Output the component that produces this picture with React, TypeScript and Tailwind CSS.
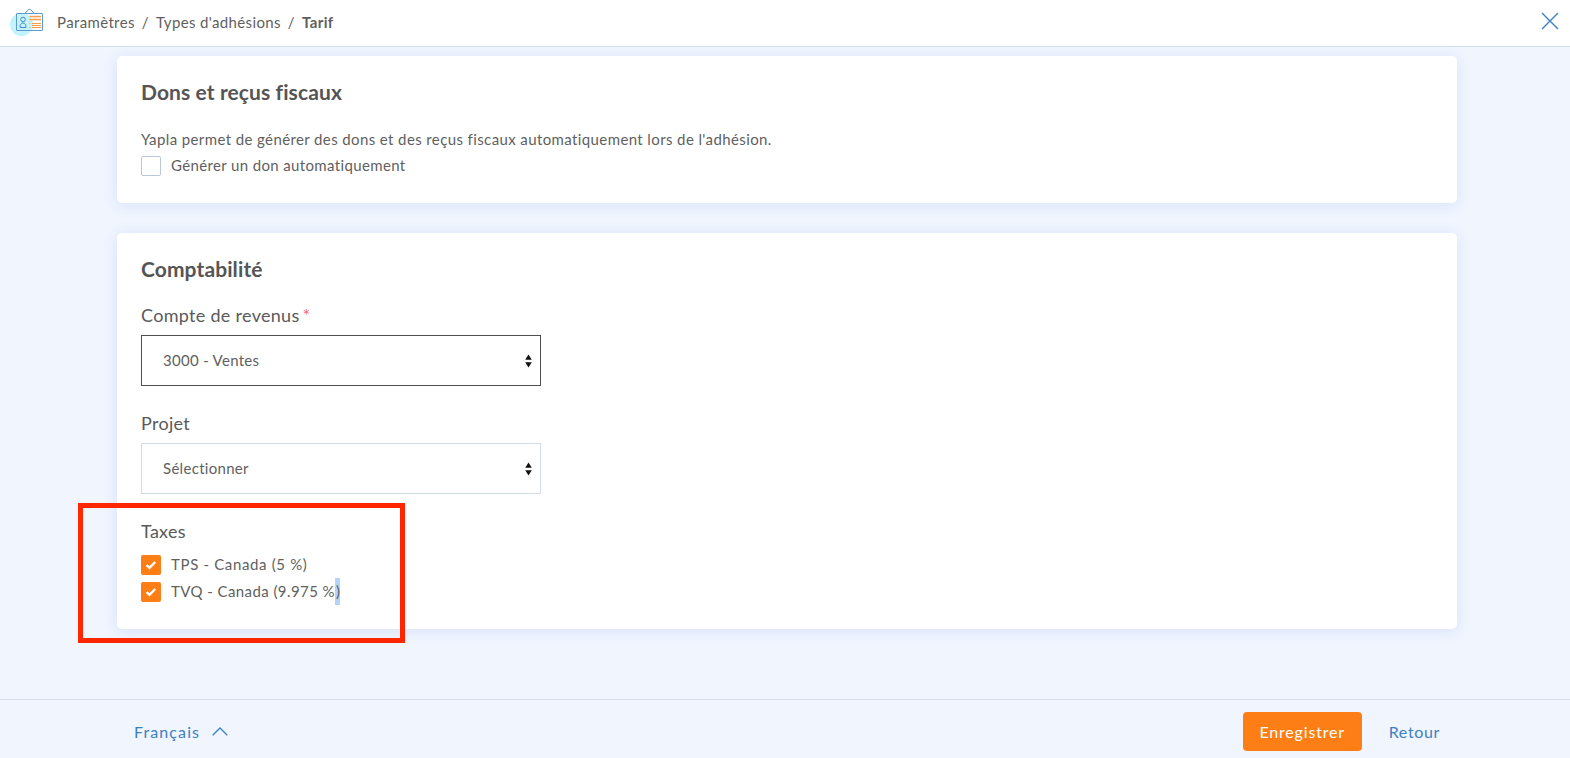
import React from "react";

const font = { fontFamily: '"Lato", "Noto Sans", sans-serif' };

function Check({ checked, label, last, tracking }: { checked?: boolean; label: string; last?: boolean; tracking: string }) {
  return (
    <div className="flex items-center h-[27px]">
      {checked ? (
        <span className="w-5 h-5 rounded-[2px] bg-[#fd7e14] flex items-center justify-center">
          <svg width="12" height="10" viewBox="0 0 12 10" fill="none">
            <path d="M1.6 5.2L4.5 7.8L10.2 2" stroke="#fff" strokeWidth="2.4" />
          </svg>
        </span>
      ) : (
        <span className="w-5 h-5 rounded-[2px] border border-[#b8c7da] bg-white" />
      )}
      <span className={`ml-[10px] text-[15px] text-[#5f5f5f] leading-[27px] ${tracking}`}>
        {label}
        {last && (
          <>
            <span className="bg-[#b4d5fb] inline-block w-[5px] h-[27px] align-top -mr-[4px]" />)
          </>
        )}
      </span>
    </div>
  );
}

function Select({ value, active }: { value: string; active?: boolean }) {
  return (
    <div className={`w-[400px] h-[51px] border bg-white flex items-center justify-between pl-[21px] pr-[8px] ${active ? "border-[#4f4f4f]" : "border-[#d2dce8]"}`}>
      <span className="text-[15px] text-[#5f5f5f] tracking-[0.3px]">{value}</span>
      <svg width="7" height="14" viewBox="0 0 7 14" fill="#111">
        <path d="M3.5 0.5L6.8 5.8H0.2Z" />
        <path d="M3.5 13.5L0.2 8.2H6.8Z" />
      </svg>
    </div>
  );
}

function Card({ title, className, children }: { title: string; className: string; children: React.ReactNode }) {
  return (
    <section className={`w-[1340px] bg-white rounded-[5px] shadow-[0_2px_14px_rgba(120,155,225,0.2)] px-6 pt-[23px] ${className}`}>
      <h2 className="text-[21px] font-bold text-[#555] leading-[26px] tracking-[0.1px]">{title}</h2>
      {children}
    </section>
  );
}

function Label({ children, className }: { children: React.ReactNode; className: string }) {
  return <div className={`text-[18px] text-[#5a5a5a] tracking-[0.3px] leading-6 flex ${className}`}>{children}</div>;
}

export default function App() {
  return (
    <div style={font} className="w-[1570px] h-[758px] overflow-hidden bg-[#f0f5fe] flex flex-col">
      <header className="h-[47px] shrink-0 bg-white border-b border-[#d5dcea] flex items-center justify-between pl-[10px] pr-[11px]">
        <div className="flex items-center">
          <svg width="34" height="30" viewBox="0 0 34 30" fill="none" className="-mt-[2px]">
            <circle cx="11.5" cy="17.5" r="11.5" fill="#c5f3fb" />
            <rect x="6.5" y="6.5" width="26" height="17" stroke="#5b9bd5" strokeWidth="1" rx="0.5" />
            <path d="M15 6.5L17 4Q19.5 0.5 22 4L24 6.5" stroke="#5b9bd5" />
            <circle cx="13" cy="12.5" r="2.3" stroke="#4a8ccb" />
            <path d="M10 20.5C10 17.5 11 16 13 16C15 16 16 17.5 16 20.5Z" stroke="#4a8ccb" />
            <path d="M19.5 9.5H31M19.5 12.5H31" stroke="#fd9a45" strokeWidth="1.4" />
            <path d="M19.5 16.5H20.5M19.5 20.5H20.5M22 16.5H31M22 18.5H31M22 20.5H31" stroke="#fd9a45" />
          </svg>
          <nav className="ml-[13px] -mt-[2px] text-[15px] text-[#5f5f5f] tracking-[0.36px] flex items-center">
            <span>Paramètres</span>
            <span className="mx-[7px]">/</span>
            <span>Types d'adhésions</span>
            <span className="mx-[7px]">/</span>
            <span className="font-bold">Tarif</span>
          </nav>
        </div>
        <svg width="18" height="18" viewBox="0 0 18 18" fill="none" className="-mt-[5px]">
          <path d="M1 1L17 17M17 1L1 17" stroke="#3d80c2" strokeWidth="1.4" />
        </svg>
      </header>

      <main className="flex-1 pl-[117px] pt-[9px] min-h-0">
        <Card title="Dons et reçus fiscaux" className="h-[147px]">
          <p className="mt-[21px] text-[15px] leading-[26px] text-[#5f5f5f] tracking-[0.39px]">
            Yapla permet de générer des dons et des reçus fiscaux automatiquement lors de l'adhésion.
          </p>
          <Check label="Générer un don automatiquement" tracking="tracking-[0.36px]" />
        </Card>

        <Card title="Comptabilité" className="h-[396px] mt-[30px]">
          <Label className="mt-[21px]">
            Compte de revenus<span className="text-[#f66] ml-[3px]">*</span>
          </Label>
          <div className="mt-[8px]">
            <Select value="3000 - Ventes" active />
          </div>
          <Label className="mt-[25px]">Projet</Label>
          <div className="mt-[8px]">
            <Select value="Sélectionner" />
          </div>
          <Label className="mt-[25px]">Taxes</Label>
          <div className="mt-[8px]">
            <Check checked label="TPS - Canada (5 %)" tracking="tracking-[0.65px]" />
            <Check checked last label="TVQ - Canada (9.975 %" tracking="tracking-[0.42px]" />
          </div>
        </Card>
      </main>

      <footer className="h-[59px] shrink-0 border-t border-[#d5dcea] flex items-center pt-[5px] pl-[134px] pr-[130px] justify-between">
        <div className="flex items-center text-[16px] text-[#3d80c2] tracking-[1.1px]">
          Français
          <svg width="16" height="9" viewBox="0 0 16 9" fill="none" className="ml-[12px]">
            <path d="M0.7 8.3L8 1L15.3 8.3" stroke="#3d80c2" strokeWidth="1.3" />
          </svg>
        </div>
        <div className="flex items-center">
          <button className="w-[119px] h-[39px] rounded-[4px] bg-[#fd7e14] text-white text-[16px] tracking-[0.83px]">Enregistrer</button>
          <span className="ml-[27px] text-[16px] text-[#3d80c2] tracking-[0.65px]">Retour</span>
        </div>
      </footer>

      <div className="absolute left-[78px] top-[503px] w-[327px] h-[140px] border-[5px] border-[#ff2600] pointer-events-none" />
    </div>
  );
}
